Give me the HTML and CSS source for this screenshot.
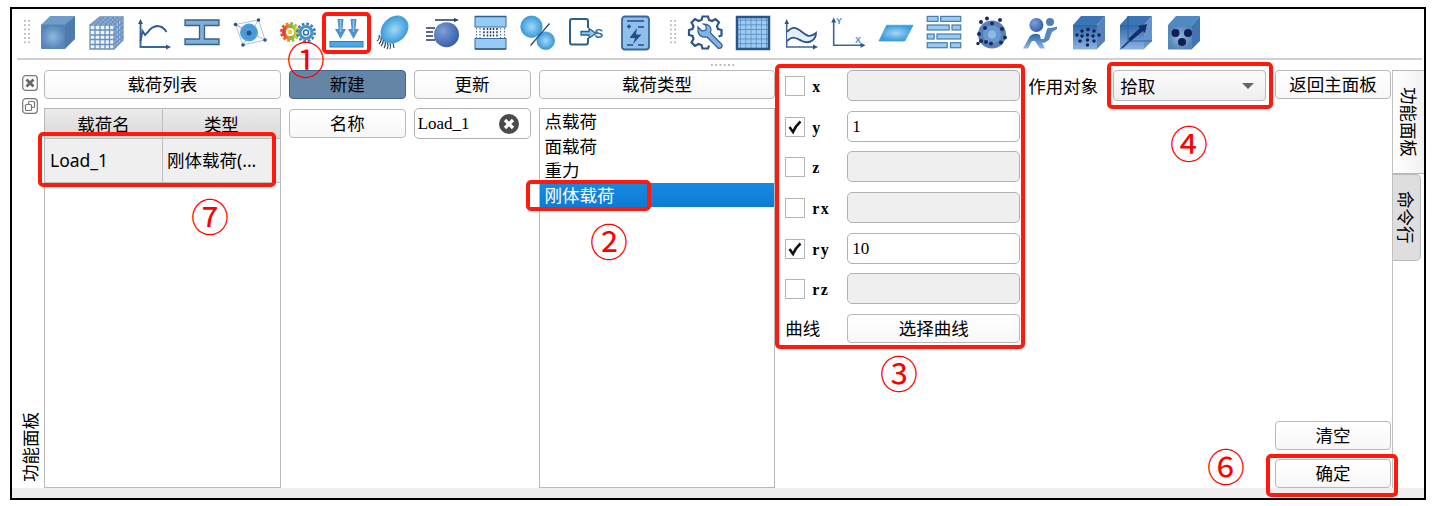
FILE: index.html
```html
<!DOCTYPE html>
<html lang="zh-CN">
<head>
<meta charset="utf-8">
<title>载荷</title>
<link rel="stylesheet" href="styles.css">
</head>
<body>
<svg class="defs" width="0" height="0">
  <defs>
    <radialGradient id="cube"><stop offset="0" stop-color="#8fb9de"/><stop offset="1" stop-color="#5686b8"/></radialGradient>
    <radialGradient id="sky"><stop offset="0" stop-color="#a4d8f5"/><stop offset="1" stop-color="#3a9cdc"/></radialGradient>
    <radialGradient id="ball" cx=".35" cy=".35" r=".75"><stop offset="0" stop-color="#7f9fd6"/><stop offset="1" stop-color="#2f58a8"/></radialGradient>
    <linearGradient id="deep" x1="0" y1="0" x2="0" y2="1"><stop offset="0" stop-color="#2a68aa"/><stop offset="1" stop-color="#8fb4e2"/></linearGradient>
    <linearGradient id="rainbow" x1="0" y1="0" x2="1" y2="0"><stop offset="0" stop-color="#e8382c"/><stop offset=".35" stop-color="#f08c2a"/><stop offset=".6" stop-color="#69bd45"/><stop offset="1" stop-color="#e5c93a"/></linearGradient>
    <pattern id="mesh2" width="5.2" height="4.7" patternUnits="userSpaceOnUse"><rect width="5.2" height="4.7" fill="#9ccbf3"/><path d="M0 0H5.2M0 0V4.7" stroke="#4a7fb5" stroke-width="1.2"/></pattern>
  </defs>
</svg>
<div class="frame">
  <div class="toolbar">
    <span class="grip"></span>
    <div class="icons">
      <svg viewBox="0 0 36 36"><path d="M1 10 10 1H35L25 10Z" fill="#6f9cc9"/><path d="M25 10 35 1V24L25 34Z" fill="#4c7cae"/><rect x="1" y="10" width="24" height="24" rx="1" fill="url(#cube)"/><path d="M1 10H25V34M25 10 35 1" fill="none" stroke="#5080b2" stroke-width=".8"/></svg>
      <svg viewBox="0 0 36 36"><path d="M2 10 12 2H35L26 10V34H2Z" fill="#edf4fc"/><path d="M26 10 35 2V25L26 34Z" fill="#b3cae3"/><path d="M2 10H26V34H2ZM7 10V34M12 10V34M17 10V34M21.500 10V34M2 15H26M2 20H26M2 24.500H26M2 29.500H26M2 10 12 2H35V25L26 34M26 10 35 2M4.500 8H28M7 6H30.500M9.500 4H33M7 10 16 2M12 10 21 2M17 10 26 2M21.500 10 30.500 2M28 8V32M30.500 6V30M33 4V28M26 15 35 7M26 20 35 12M26 24.500 35 16.500M26 29.500 35 21" fill="none" stroke="#688fbd" stroke-width="1.300"/></svg>
      <svg viewBox="0 0 36 36"><path d="M4.500 8V32H31" fill="none" stroke="#3c6598" stroke-width="1.900"/><path d="M4.500 4 2 9H7ZM35 32 30 29.500V34.500Z" fill="#2d568c"/><path d="M4.500 26 6.500 16 9 20 12 17Q15 12 21 11Q27 11 30.500 17" fill="none" stroke="#2f5b93" stroke-width="1.900"/></svg>
      <svg viewBox="0 0 36 36"><path d="M1 5H35V10.500H20.500V24H35V29.500H1V24H15.500V10.500H1Z" fill="#82add5" stroke="#34618f" stroke-width="1.300"/></svg>
      <svg viewBox="0 0 36 36"><circle cx="17" cy="17.500" r="9" fill="url(#sky)"/><path d="M3.500 9.500 26.500 5 33 25 11 30ZM3.500 9.500 33 25M26.500 5 11 30M3.500 9.500 17 18" fill="none" stroke="#8ba3c2" stroke-width=".7"/><circle cx="17" cy="17.500" r="7" fill="#3b8fd2" opacity=".7"/><g fill="#25538b"><circle cx="17" cy="18" r="2.500"/><circle cx="3.500" cy="9.500" r="1.800"/><circle cx="26.500" cy="5" r="1.800"/><circle cx="33" cy="25" r="1.800"/><circle cx="11" cy="30" r="1.800"/></g></svg>
      <svg viewBox="0 0 36 36"><circle cx="10" cy="17" r="6" fill="none" stroke="url(#rainbow)" stroke-width="4"/><circle cx="10" cy="17" r="8.700" fill="none" stroke="url(#rainbow)" stroke-width="2.500" stroke-dasharray="2.700 1.855"/><circle cx="10" cy="17" r="2.200" fill="#f3c638"/><circle cx="26" cy="17.500" r="6" fill="none" stroke="#4992ca" stroke-width="3.200"/><circle cx="26" cy="17.500" r="8.700" fill="none" stroke="#397db9" stroke-width="2.500" stroke-dasharray="2.700 1.855"/><circle cx="26" cy="17.500" r="2.500" fill="none" stroke="#2f6ca8" stroke-width="1.500"/></svg>
      <svg viewBox="0 0 36 36"><path d="M9.500 4H15.500L14.500 14H18L12.500 24 7 14H10.500ZM22.500 4H28.500L27.500 14H31L25.500 24 20 14H23.500Z" fill="#4d93cf"/><path d="M12.500 5V17M25.500 5V17" stroke="#8fc4ea" stroke-width="1.500"/><rect x="2" y="26.500" width="33" height="5.500" fill="#4aa9e5" stroke="#347cb8"/></svg>
      <svg viewBox="0 0 36 36"><path d="M3 20Q4 24 1 26M5 21Q6 26 3 29M7 23Q8 28 5 31M9 25Q10 30 8 33M11 27Q13 31 11 34M14 28Q15 32 14 34M17 28 18 33" fill="none" stroke="#1e3c60" stroke-width="1.100"/><ellipse cx="18.500" cy="14.500" rx="15" ry="12" transform="rotate(-45 18.500 14.500)" fill="url(#sky)" stroke="#4596cf" stroke-width=".7"/></svg>
      <svg viewBox="0 0 36 36"><circle cx="22.500" cy="19.700" r="12.500" fill="url(#ball)"/><path d="M11 5H32M2 13H11M2 17H9M2 21H9M2 25H11" stroke="#243969" stroke-width="1.500"/><path d="M35 5 30 3V7Z" fill="#243969"/></svg>
      <svg viewBox="0 0 36 36"><g fill="#95cbf4" stroke="#3c6b9d"><rect x="3" y="1.500" width="31" height="10.500"/><rect x="3" y="23.500" width="31" height="10.500"/></g><path d="M3 1.500H34M3 34H34" stroke="#2f5c8d" stroke-width="1.500"/><path d="M4.500 13V23M8 13V23M28.500 13V23M32.500 13V23" stroke="#49729c" stroke-width="1.200" stroke-dasharray="1.500 1.500"/><path d="M12 13V23M15.500 13V23M18.500 13V23M21.500 13V23M25 13V23" stroke="#183b65" stroke-width="1.500" stroke-dasharray="2 1.300"/></svg>
      <svg viewBox="0 0 36 36"><circle cx="11.500" cy="11.700" r="10.700" fill="url(#sky)" stroke="#3f94cd" stroke-width=".8"/><circle cx="25.700" cy="25.700" r="8.800" fill="url(#sky)" stroke="#3f94cd" stroke-width=".8"/><path d="M10.500 30.500 29.500 8.500" stroke="#24496f" stroke-width="1.200"/></svg>
      <svg viewBox="0 0 36 36"><path d="M20 13V6Q20 4 18 4H4Q2 4 2 6V27Q2 29.500 4 29.500H18Q20 29.500 20 27V23" fill="none" stroke="#28618e" stroke-width="2"/><path d="M13 16.500H21V13.500L28 18.500 21 23V20H13Z" fill="#8fc6ea" stroke="#28618e" stroke-width="1.300"/><text x="26.500" y="23" class="glyph-s">S</text></svg>
      <svg viewBox="0 0 36 36"><rect x="6" y="1.500" width="27" height="33" rx="3" fill="#8fc0ed" stroke="#37689d" stroke-width="1.800"/><path d="M11 6H28M11 30H17M22 30H28M11 11.500H15M13 9.500V13.500M22 12H28" stroke="#234c80" stroke-width="1.500"/><path d="M21 13 13.500 23H19L17 29 25.500 19.500H20Z" fill="#274b86"/></svg>
    </div>
    <span class="grip second"></span>
    <div class="icons narrow">
      <svg viewBox="0 0 36 36"><path d="M31.500 21.500 34.500 20.500V15L31 14 30 11 32 7.500 28.500 4 25 6 22 5 21 1.500H15.500L14.500 5 11.500 6 8 4 4.500 7.500 6.500 11 5.500 14 2 15V20L5.500 21 6.500 24 4.500 27.500 8 31 11.500 29 14.500 30 15.500 33.500H21L22 30.500" fill="none" stroke="#2c5489" stroke-width="2.200"/><path d="M11 12 15 16 19 15 19 10.500 16.500 9Q23 9 24 14L23.500 18 35 29.500Q36 33 31.500 33.500L20 22Q13 23 11 17Z" fill="#80b4e5" stroke="#315d91" stroke-width="1.200"/></svg>
      <svg viewBox="0 0 36 36"><rect x="2" y="2" width="32" height="32" fill="url(#mesh2)" stroke="#29558b" stroke-width="2.500"/></svg>
      <svg viewBox="0 0 36 36"><path d="M3.700 8V32H31" fill="none" stroke="#3c6598" stroke-width="1.500"/><path d="M3.700 4 1.500 9H6ZM35 32 30 29.500V34.500Z" fill="#2d568c"/><path d="M4 17C10 10 14 13 19 17S27 23 33 18V22C30 29 25 29 19 26S10 20 4 26Z" fill="#e2eefb"/><path d="M4 17C10 10 14 13 19 17S27 23 33 18C33 26 25 29 19 26S10 20 4 26" fill="none" stroke="#2d568c" stroke-width="1.800"/></svg>
      <svg viewBox="0 0 36 36"><path d="M2.700 6V30.300H30" fill="none" stroke="#3c6598" stroke-width="1.600"/><path d="M2.700 2.500.2 7.500H5.200ZM34.500 30.300 29.500 27.800V32.800Z" fill="#2d568c"/><text x="5" y="9.300" class="axis">Y</text><text x="24" y="27.800" class="axis">X</text></svg>
      <svg viewBox="0 0 36 36"><path d="M1 26 8.700 10.300H35L26.700 26Z" fill="url(#sky)" stroke="#419bd3" stroke-width=".8"/></svg>
      <svg viewBox="0 0 36 36"><g fill="#95cbf4" stroke="#4b7ba8" stroke-width="1.200"><rect x="1.200" y="1.400" width="10.800" height="5"/><rect x="14.700" y="1.400" width="20" height="5"/><rect x="1.200" y="10" width="22" height="5"/><rect x="26" y="10" width="8.700" height="5"/><rect x="1.200" y="19" width="7" height="5"/><rect x="11" y="19" width="23.700" height="5"/><rect x="1.200" y="27.700" width="20" height="5"/><rect x="24.500" y="27.700" width="10.200" height="5"/></g></svg>
      <svg viewBox="0 0 36 36"><circle cx="18" cy="19.500" r="14" fill="#5880b8"/><circle cx="18" cy="19.500" r="9" fill="#6b98cc"/><circle cx="18" cy="19.500" r="4" fill="#8dbbe8"/><g fill="#182a63"><circle cx="7" cy="7" r="2"/><circle cx="13" cy="3.500" r="2"/><circle cx="18" cy="8.500" r="2"/><circle cx="26" cy="5" r="2"/><circle cx="11" cy="13" r="2"/><circle cx="28" cy="14" r="2"/><circle cx="5" cy="19" r="2"/><circle cx="31" cy="22.500" r="2"/><circle cx="7" cy="26" r="2"/><circle cx="12" cy="27" r="2"/><circle cx="17" cy="28.500" r="2"/><circle cx="27" cy="27.500" r="2"/><circle cx="4" cy="28.500" r="1.700"/></g></svg>
      <svg viewBox="0 0 36 36"><circle cx="14.400" cy="10" r="7" fill="url(#ball)"/><circle cx="28" cy="7" r="4" fill="#4f7fb9"/><path d="M1 33.500 8 21Q13 17 18 20L19 25 23 33.500H18L13 26 10 26 6 33.500Z" fill="url(#deep)"/><path d="M25 14Q26 12 29 13L35 11.500V14L30 17 27 25 22 28 19 27 18.500 24 22 24Z" fill="#5289c3"/></svg>
      <svg viewBox="0 0 36 36"><path d="M3 10 11 1H35L27 10Z" fill="#3b75b3"/><path d="M27 10 35 1V26L27 34Z" fill="#5681bd"/><rect x="3" y="10" width="24" height="24.500" fill="url(#deep)"/><g fill="#101e59"><circle cx="7" cy="20" r="1.700"/><circle cx="12" cy="16" r="1.700"/><circle cx="18" cy="14.500" r="1.700"/><circle cx="24" cy="16" r="1.700"/><circle cx="29" cy="20" r="1.700"/><circle cx="12" cy="21" r="1.700"/><circle cx="17.500" cy="20" r="1.700"/><circle cx="23" cy="21" r="1.700"/><circle cx="10" cy="26" r="1.700"/><circle cx="17.500" cy="25" r="1.700"/><circle cx="24" cy="26" r="1.700"/><circle cx="17.500" cy="30" r="1.700"/></g></svg>
      <svg viewBox="0 0 36 36"><path d="M2 10 10 1H34L26 10Z" fill="#3b75b3"/><path d="M26 10 34 1V26L26 34Z" fill="#6594cd"/><rect x="2" y="10" width="24" height="24.500" fill="url(#deep)"/><path d="M10 1V26H34M10 26 2 34.500" fill="none" stroke="#365e9b"/><path d="M4 33 18 20" stroke="#193f80" stroke-width="1.500"/><path d="M10 24 22 13 20 11 29 9 27 18 25 16 13 26Z" fill="#172f69"/></svg>
      <svg viewBox="0 0 36 36"><path d="M2 10 10 1H34L26 10Z" fill="#4f8ac4"/><path d="M26 10 34 1V26L26 34Z" fill="#3f75b2"/><rect x="2" y="10" width="24" height="24.500" fill="url(#cube)"/><g fill="#111d55"><circle cx="9.500" cy="18" r="4"/><circle cx="22" cy="18" r="4"/><circle cx="16" cy="27" r="4"/></g></svg>
    </div>
  </div>
  <div class="splitter"><span class="splitter-dots"></span></div>

  <div class="main">
    <div class="dock">
      <svg viewBox="0 0 16 16"><rect x=".7" y=".7" width="14.600" height="14.600" rx="3" fill="#fff" stroke="#777" stroke-width="1.200"/><path d="M4.500 4.500 11.500 11.500M11.500 4.500 4.500 11.500" stroke="#666" stroke-width="2.800"/></svg>
      <svg viewBox="0 0 16 16"><rect x=".7" y=".7" width="14.600" height="14.600" rx="3" fill="#fff" stroke="#777" stroke-width="1.200"/><rect x="6.500" y="3.500" width="6" height="6" rx="1" fill="#fff" stroke="#777" stroke-width="1.200"/><rect x="3.500" y="6.500" width="6" height="6" rx="1" fill="#fff" stroke="#777" stroke-width="1.200"/></svg>
      <span class="dock-title">功能面板</span>
    </div>

    <div class="col wide">
      <div class="btn">载荷列表</div>
      <div class="table">
        <div class="tr th"><span>载荷名</span><span>类型</span></div>
        <div class="tr td"><span>Load_1</span><span>刚体载荷(...</span></div>
      </div>
    </div>

    <div class="col half">
      <div class="btn active">新建</div>
      <div class="btn name">名称</div>
    </div>
    <div class="col half">
      <div class="btn">更新</div>
      <div class="input clearable">Load_1<svg viewBox="0 0 20 20"><circle cx="10" cy="10" r="10" fill="#4b4b4b"/><path d="M6 6 14 14M14 6 6 14" stroke="#fff" stroke-width="3.200"/></svg></div>
    </div>

    <div class="col wide">
      <div class="btn">载荷类型</div>
      <div class="list"><span>点载荷</span><span>面载荷</span><span>重力</span><span class="selected">刚体载荷</span></div>
    </div>

    <div class="form">
      <div class="field"><i class="check"></i><label>x</label><div class="input off"></div></div>
      <div class="field"><i class="check"><svg viewBox="0 0 18 18"><path d="M3.500 9 7 14Q9.500 8 14.500 3.500" fill="none" stroke="#111" stroke-width="2.500"/></svg></i><label>y</label><div class="input">1</div></div>
      <div class="field"><i class="check"></i><label>z</label><div class="input off"></div></div>
      <div class="field"><i class="check"></i><label>rx</label><div class="input off"></div></div>
      <div class="field"><i class="check"><svg viewBox="0 0 18 18"><path d="M3.500 9 7 14Q9.500 8 14.500 3.500" fill="none" stroke="#111" stroke-width="2.500"/></svg></i><label>ry</label><div class="input">10</div></div>
      <div class="field"><i class="check"></i><label>rz</label><div class="input off"></div></div>
      <div class="field"><span class="curve">曲线</span><div class="btn">选择曲线</div></div>
    </div>

    <div class="target">作用对象</div>
    <div class="combo">拾取<svg viewBox="0 0 12 6"><path d="M0 0H12L6 6Z" fill="#666"/></svg></div>

    <div class="actions">
      <div class="btn">返回主面板</div>
      <div class="btn push">清空</div>
      <div class="btn">确定</div>
    </div>

    <div class="tabs">
      <div class="tab current">功能面板</div>
      <div class="tab">命令行</div>
    </div>
  </div>
  <div class="status"></div>
</div>

<div class="mark m1"></div><div class="mark m2"></div><div class="mark m3"></div>
<div class="mark m4"></div><div class="mark m6"></div><div class="mark m7"></div>
<span class="num n1">①</span><span class="num n2">②</span><span class="num n3">③</span>
<span class="num n4">④</span><span class="num n6">⑥</span><span class="num n7">⑦</span>
</body>
</html>
```
FILE: styles.css
```css
* { box-sizing: border-box; }
body {
  margin: 0;
  background: #fff;
  color: #000;
  font: 17.5px/1 "Noto Sans CJK SC", sans-serif;
  position: relative;
  width: 1434px;
  height: 506px;
  overflow: hidden;
}
.defs { position: absolute; }
.frame {
  margin: 7px 0 0 10px;
  width: 1416px;
  height: 493px;
  border: 2px solid #000;
  display: flex;
  flex-direction: column;
}

/* toolbar */
.toolbar {
  height: 51px;
  margin: 0 2px 0 5px;
  padding: 6px 0 0 7px;
  border-bottom: 2px solid #d0d0d0;
  display: flex;
  align-items: flex-start;
}
.grip {
  width: 6px;
  height: 24px;
  margin: 5px 4px 0 0;
  background: radial-gradient(circle at 1px 1px, #b5b5b5 0.9px, transparent 1.1px) 0 0 / 4.3px 4.3px;
}
.grip.second { margin: 5px 5px 0 12px; }
.icons { display: flex; }
.icons svg { width: 36px; height: 36px; margin: 0 6px; overflow: visible; }
.icons.narrow svg { margin: 0 5.95px; }
.glyph-s { font: bold 13px "Liberation Sans", sans-serif; fill: #376f9f; }
.axis { font: bold 9px "Liberation Sans", sans-serif; fill: #3b94d0; }

.splitter { height: 10px; padding: 4px 0 0 699px; }
.splitter-dots {
  display: block;
  width: 25px;
  height: 2px;
  background: radial-gradient(circle at 1px 1px, #b5b5b5 0.9px, transparent 1.1px) 0 0 / 4.3px 2px;
}

/* work area */
.main { height: 418px; display: flex; align-items: stretch; }
.status { flex: 1; background: #efefef; }

.dock {
  width: 32px;
  padding: 5px 0 6px 10px;
  display: flex;
  flex-direction: column;
  gap: 7px;
}
.dock svg { width: 16px; height: 16px; }
.dock-title {
  margin-top: auto;
  margin-left: -1px;
  width: 18px;
  writing-mode: vertical-rl;
  text-orientation: sideways;
  transform: rotate(180deg);
  line-height: 18px;
}

.btn {
  height: 29px;
  flex: none;
  border: 1.5px solid #b8b8b8;
  border-radius: 4px;
  background: linear-gradient(#fff, #f7f7f7);
  text-align: center;
  line-height: 25px;
}
.btn.active { background: #6485a6; border-color: #40658a; }
.btn.name { margin-top: 1px; }
.col { display: flex; flex-direction: column; gap: 9px; margin-right: 8px; }
.wide { width: 237px; }
.half { width: 117px; }

.table { flex: 1; border: 1px solid #b8b8b8; }
.tr { display: grid; grid-template-columns: 117px 1fr; border-bottom: 1px solid #bebebe; }
.tr span + span { border-left: 1px solid #bebebe; }
.th { height: 30px; background: linear-gradient(#ebebeb, #d9d9d9); text-align: center; line-height: 30px; }
.td { height: 44px; background: #efefef; line-height: 43px; font-family: "Noto Sans", "Noto Sans CJK SC", sans-serif; }
.td span { padding-left: 5px; white-space: nowrap; }
.td span + span { padding-left: 4px; }

.input {
  height: 31px;
  border: 1.5px solid #b0b0b0;
  border-radius: 5px;
  background: #fff;
  padding-left: 4px;
  line-height: 29px;
  font-family: "Liberation Serif", serif;
  font-size: 17px;
}
.input.off { background: #efefef; }
.clearable { display: flex; justify-content: space-between; padding: 0 11px 0 3px; }
.clearable svg { width: 20px; height: 20px; margin-top: 4.5px; }

.list {
  flex: 1;
  border: 1px solid #b8b8b8;
  display: flex;
  flex-direction: column;
}
.list span { height: 24.5px; line-height: 24px; padding-left: 5px; }
.list .selected { background: linear-gradient(#1989e0, #0b7bd5); color: #fff; }

.form {
  width: 235px;
  margin-left: 2px;
  display: flex;
  flex-direction: column;
  gap: 9.65px;
}
.field { display: grid; grid-template-columns: 26px 36px 173px; align-items: start; }
.check { width: 20px; height: 20px; border: 1px solid #b5b5b5; background: #fff; margin-top: 6px; }
.check svg { display: block; width: 18px; height: 18px; }
.field label { font: bold 16px/34px "Liberation Serif", serif; height: 31px; letter-spacing: 1.2px; padding-left: 1px; }
.curve { grid-column: 1 / 3; line-height: 28px; }

.target { width: 85px; margin-left: 8px; line-height: 32px; }
.combo {
  width: 153px;
  height: 31px;
  border: 1.5px solid #b8b8b8;
  border-radius: 4px;
  background: linear-gradient(#fcfcfc, #eee);
  line-height: 29px;
  padding: 0 11px 0 6px;
  display: flex;
  justify-content: space-between;
}
.combo svg { width: 12px; height: 6px; margin-top: 12px; }
.actions { width: 116px; margin-left: 9px; display: flex; flex-direction: column; }
.actions .push { margin: auto 0 9px; }

.tabs { width: 32px; margin-left: 1px; border-left: 1px solid #c0c0c0; }
.tab {
  width: 28px;
  height: 87px;
  writing-mode: vertical-rl;
  text-orientation: sideways;
  text-align: center;
  line-height: 28px;
  background: #dedede;
  border: 1px solid #b8b8b8;
  border-left: 0;
  border-radius: 0 5px 5px 0;
}
.tab.current {
  width: 31px;
  height: 104px;
  line-height: 30px;
  background: linear-gradient(90deg, #fff, #f1f1f1);
  border-right: 0;
  border-radius: 0;
}

/* annotations */
.mark { position: absolute; border: 4px solid #ff1a0d; border-radius: 5px; }
.m1 { left: 322px; top: 12px; width: 49px; height: 42px; }
.m2 { left: 526px; top: 180px; width: 125px; height: 31px; }
.m3 { left: 775px; top: 64px; width: 250px; height: 285px; }
.m4 { left: 1107px; top: 62px; width: 166px; height: 47px; }
.m6 { left: 1266px; top: 454px; width: 132px; height: 43px; }
.m7 { left: 38px; top: 132px; width: 238px; height: 55px; }
.num {
  position: absolute;
  width: 40px;
  height: 40px;
  text-align: center;
  font-size: 38px;
  line-height: 40px;
  color: #f00;
}
.n1 { left: 286px; top: 38px; }
.n2 { left: 589px; top: 220px; }
.n3 { left: 879px; top: 352px; }
.n4 { left: 1169px; top: 122px; }
.n6 { left: 1206px; top: 445px; }
.n7 { left: 190px; top: 195px; }
```
